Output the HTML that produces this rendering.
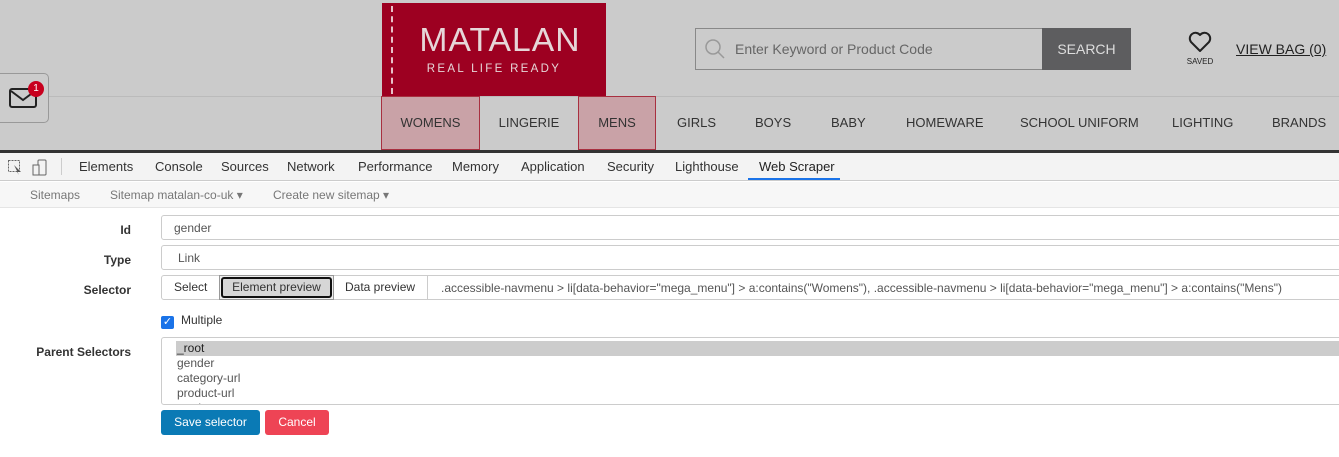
<!DOCTYPE html>
<html><head><style>
*{margin:0;padding:0;box-sizing:border-box}
body{width:1339px;height:457px;overflow:hidden;background:#fff;font-family:"Liberation Sans",sans-serif;position:relative}
.a{position:absolute}
.top{left:0;top:0;width:1339px;height:150px;background:#cbcbcb}
.nav{font-size:13px;color:#333;top:96px;height:54px;line-height:54px;white-space:nowrap}
.hl{background:#c9a2a7;border:1px solid #a83040;line-height:52px;text-align:center}
.tab{top:153px;height:28px;line-height:28px;color:#333;font-family:"Liberation Sans",sans-serif;font-size:13px}
.lbl{font-size:12px;font-weight:bold;color:#333;text-align:right;width:131px;left:0}
.inp{left:161px;width:1190px;border:1px solid #ccc;border-radius:3px;font-size:12px;color:#555;background:#fff}
</style></head><body>
<div class="a top"></div>
<div class="a" style="left:0;top:96px;width:1339px;height:1px;background:#bbb"></div>
<div class="a" style="left:382px;top:3px;width:224px;height:93px;background:#9d0021"></div>
<div class="a" style="left:391px;top:6px;width:0;height:88px;border-left:2px dashed #e8c0c8"></div>
<div class="a" style="left:408px;top:21px;width:184px;text-align:center;color:#e6d6d8;font-size:33px;letter-spacing:1px;transform:scaleX(1.02)">MATALAN</div>
<div class="a" style="left:382px;top:63px;width:224px;text-align:center;color:#e6d6d8;font-size:11.5px;letter-spacing:2.3px">REAL LIFE READY</div>
<div class="a" style="left:0;top:73px;width:49px;height:50px;border:1px solid #999;border-left:none;border-radius:0 5px 5px 0;background:#ccc"></div>
<svg class="a" style="left:8px;top:87px" width="30" height="22"><rect x="2" y="2" width="26" height="18" rx="2" fill="none" stroke="#222" stroke-width="2"/><path d="M3 4 L15 13 L27 4" fill="none" stroke="#222" stroke-width="2"/></svg>
<div class="a" style="left:28px;top:81px;width:16px;height:16px;border-radius:8px;background:#c8001e;color:#fff;font-size:10px;text-align:center;line-height:16px">1</div>
<div class="a" style="left:695px;top:28px;width:348px;height:42px;border:1px solid #888;background:#cbcbcb"></div>
<svg class="a" style="left:704px;top:38px" width="22" height="22"><circle cx="9" cy="9" r="7" fill="none" stroke="#999" stroke-width="1.5"/><path d="M14 14 L20 20" stroke="#999" stroke-width="1.5"/></svg>
<div class="a" style="left:735px;top:41px;font-size:14px;color:#666">Enter Keyword or Product Code</div>
<div class="a" style="left:1042px;top:28px;width:89px;height:42px;background:#5d5d5f;color:#ddd;font-size:14px;line-height:42px;text-align:center">SEARCH</div>
<svg class="a" style="left:1188px;top:31px" width="24" height="22"><path d="M12 20 L3 11 A5 5 0 0 1 12 4 A5 5 0 0 1 21 11 Z" fill="none" stroke="#222" stroke-width="2" stroke-linejoin="round"/></svg>
<div class="a" style="left:1180px;top:57px;width:40px;text-align:center;font-size:8px;color:#222">SAVED</div>
<div class="a" style="left:1236px;top:41px;font-size:14px;color:#222;text-decoration:underline">VIEW BAG (0)</div>
<div class="a nav hl" style="left:381px;width:99px">WOMENS</div>
<div class="a nav" style="left:480px;width:98px;text-align:center">LINGERIE</div>
<div class="a nav hl" style="left:578px;width:78px">MENS</div>
<div class="a nav" style="left:677px">GIRLS</div>
<div class="a nav" style="left:755px">BOYS</div>
<div class="a nav" style="left:831px">BABY</div>
<div class="a nav" style="left:906px">HOMEWARE</div>
<div class="a nav" style="left:1020px">SCHOOL UNIFORM</div>
<div class="a nav" style="left:1172px">LIGHTING</div>
<div class="a nav" style="left:1272px">BRANDS</div>
<div class="a" style="left:0;top:150px;width:1339px;height:3px;background:#333"></div>
<div class="a" style="left:0;top:153px;width:1339px;height:28px;background:#f3f3f3;border-bottom:1px solid #ccc"></div>
<svg class="a" style="left:7px;top:159px" width="40" height="17"><rect x="1.5" y="1.5" width="11" height="11" fill="none" stroke="#666" stroke-dasharray="2 1"/><path d="M7 6 L14 13 L10 13 L12 16" fill="#555"/><rect x="31" y="1" width="8" height="15" rx="1" fill="none" stroke="#666"/><rect x="26" y="6" width="6" height="10" fill="#f3f3f3" stroke="#666"/></svg>
<div class="a" style="left:61px;top:158px;width:1px;height:17px;background:#ccc"></div>
<div class="a tab" style="left:79px">Elements</div>
<div class="a tab" style="left:155px">Console</div>
<div class="a tab" style="left:221px">Sources</div>
<div class="a tab" style="left:287px">Network</div>
<div class="a tab" style="left:358px">Performance</div>
<div class="a tab" style="left:452px">Memory</div>
<div class="a tab" style="left:521px">Application</div>
<div class="a tab" style="left:607px">Security</div>
<div class="a tab" style="left:675px">Lighthouse</div>
<div class="a tab" style="left:759px;color:#222">Web Scraper</div>
<div class="a" style="left:748px;top:178px;width:92px;height:2px;background:#1a73e8"></div>
<div class="a" style="left:0;top:182px;width:1339px;height:26px;background:#f7f7f7;border-bottom:1px solid #e5e5e5"></div>
<div class="a" style="left:30px;top:188px;font-size:12px;color:#777">Sitemaps</div>
<div class="a" style="left:110px;top:188px;font-size:12px;color:#777">Sitemap matalan-co-uk ▾</div>
<div class="a" style="left:273px;top:188px;font-size:12px;color:#777">Create new sitemap ▾</div>
<div class="a lbl" style="top:223px">Id</div>
<div class="a inp" style="top:215px;height:25px;padding:5px 12px">gender</div>
<div class="a lbl" style="top:253px">Type</div>
<div class="a inp" style="top:245px;height:25px;padding:5px 16px">Link</div>
<div class="a lbl" style="top:283px">Selector</div>
<div class="a inp" style="top:275px;height:25px"></div>
<div class="a" style="left:174px;top:280px;font-size:12px;color:#333">Select</div>
<div class="a" style="left:219px;top:275px;width:115px;height:25px;border:1px solid #999;background:#eee"></div>
<div class="a" style="left:221px;top:277px;width:111px;height:21px;border:2px solid #111;border-radius:3px;background:#d6d6d6;font-size:12px;color:#333;text-align:center;line-height:17px">Element preview</div>
<div class="a" style="left:345px;top:280px;font-size:12px;color:#333">Data preview</div>
<div class="a" style="left:427px;top:276px;width:1px;height:23px;background:#ccc"></div>
<div class="a" style="left:441px;top:281px;font-size:12px;color:#555;white-space:nowrap">.accessible-navmenu &gt; li[data-behavior="mega_menu"] &gt; a:contains("Womens"), .accessible-navmenu &gt; li[data-behavior="mega_menu"] &gt; a:contains("Mens")</div>
<div class="a" style="left:161px;top:316px;width:13px;height:13px;border-radius:2px;background:#1a73e8;color:#fff;font-size:11px;line-height:13px;text-align:center">✓</div>
<div class="a" style="left:181px;top:313px;font-size:12px;color:#333">Multiple</div>
<div class="a lbl" style="top:345px">Parent Selectors</div>
<div class="a inp" style="top:337px;height:68px;overflow:hidden;padding:3px 0 0 14px;line-height:15px">
<div style="background:#ccc;color:#222;padding-left:1px">_root</div><div style="padding-left:1px">gender</div><div style="padding-left:1px">category-url</div><div style="padding-left:1px">product-url</div><div style="padding-left:1px">product</div></div>
<div class="a" style="left:161px;top:410px;width:99px;height:25px;background:#0a7ab5;border-radius:3px;color:#fff;font-size:12px;line-height:24px;text-align:center">Save selector</div>
<div class="a" style="left:265px;top:410px;width:64px;height:25px;background:#ee4455;border-radius:3px;color:#fff;font-size:12px;line-height:24px;text-align:center">Cancel</div>
</body></html>
